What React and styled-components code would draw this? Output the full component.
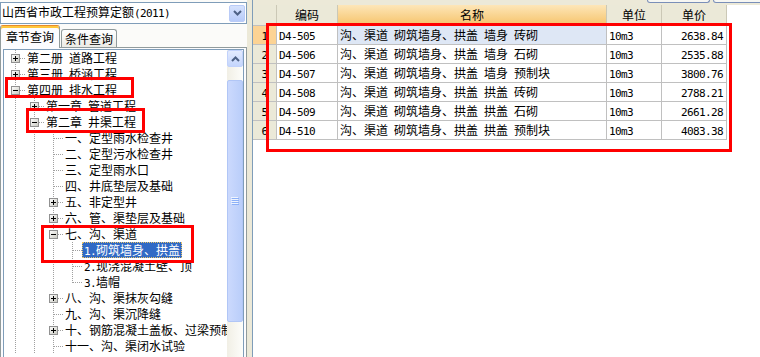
import React from "react";
import styled, { createGlobalStyle, css } from "styled-components";

const Global = createGlobalStyle`
  html, body { margin: 0; padding: 0; background: #fff; }
  body {
    font-family: "Noto Sans CJK SC", "Noto Sans", sans-serif;
    font-size: 12px;
    color: #000;
  }
  #root { width: 760px; height: 357px; }
`;

const Screen = styled.div`
  position: relative;
  width: 760px;
  height: 357px;
  overflow: hidden;
  display: flex;
  background: #ece9d8;
`;

/* ---------- text helper ---------- */
const Latin = styled.span`
  font-family: "DejaVu Sans Mono", "Liberation Mono", monospace;
  font-size: 11px;
  letter-spacing: -0.62px;
`;

function Mixed({ text }) {
  const parts = text.split(/([\x20-\x7e]+)/).filter(Boolean);
  return (
    <>
      {parts.map((p, i) =>
        /^[\x20-\x7e]+$/.test(p) ? (
          <Latin key={i}>{p}</Latin>
        ) : (
          <React.Fragment key={i}>{p}</React.Fragment>
        )
      )}
    </>
  );
}

/* ---------- left panel ---------- */
const LeftPanel = styled.div`
  width: 247px;
  flex: none;
  display: flex;
  flex-direction: column;
  background: #fbfbf9;
`;

const Combo = styled.div`
  margin-top: 2px;
  height: 22px;
  box-sizing: border-box;
  border: 1px solid #7f9db9;
  background: #fff;
  display: flex;
  align-items: center;
  padding: 0 1px;
`;

const ComboText = styled.div`
  flex: 1;
  line-height: 20px;
  white-space: pre;
  overflow: hidden;
`;

const DropButton = styled.div`
  width: 16px;
  height: 17px;
  box-sizing: border-box;
  border: 1px solid #b9cbf7;
  border-radius: 2px;
  background: linear-gradient(#d6e2fd, #b7cbf9);
  display: flex;
  align-items: center;
  justify-content: center;
`;

const TabRow = styled.div`
  margin-top: 1px;
  height: 22px;
  display: flex;
  align-items: flex-end;
`;

const Tab = styled.div`
  box-sizing: border-box;
  border: 1px solid #919b9c;
  border-bottom: none;
  border-radius: 3px 3px 0 0;
  white-space: nowrap;
  text-align: center;
  ${(p) =>
    p.$active
      ? css`
          width: 60px;
          height: 23px;
          margin-bottom: -1px;
          position: relative;
          z-index: 1;
          background: #fcfcfe;
          border-top: 1px solid #e68b2c;
          box-shadow: inset 0 2px 0 #ffc73c;
          line-height: 22px;
        `
      : css`
          width: 56px;
          height: 18px;
          margin-left: 1px;
          background: linear-gradient(#ffffff, #ecebe6);
          line-height: 17px;
        `}
`;

const TabPanel = styled.div`
  flex: 1;
  min-height: 0;
  box-sizing: border-box;
  border: 1px solid #919b9c;
  border-bottom: none;
  padding: 1px 2px 0 2px;
  display: flex;
  background: #fcfcfe;
`;

const TreeBox = styled.div`
  flex: 1;
  min-width: 0;
  border: 1px solid #7f9db9;
  border-bottom: none;
  background: #fff;
  display: flex;
`;

const TreeView = styled.div`
  flex: 1;
  min-width: 0;
  overflow: hidden;
  padding-left: 2px;
`;

const TreeRow = styled.div`
  display: flex;
  height: 16px;
  white-space: pre;
`;

const Label = styled.span`
  height: 16px;
  line-height: 16px;
  padding: 0 2px;
  box-sizing: border-box;
  ${(p) =>
    p.$selected &&
    css`
      background: #316ac5;
      color: #fff;
      outline: 1px dotted #e8c46a;
      outline-offset: -1px;
    `}
`;

const VScroll = styled.div`
  width: 16px;
  flex: none;
  display: flex;
  flex-direction: column;
  background: linear-gradient(to right, #f1efe5, #fdfdfa);
`;

const ScrollButton = styled.div`
  height: 17px;
  box-sizing: border-box;
  border: 1px solid #c2d2fb;
  border-radius: 2px;
  background: linear-gradient(#e3ebfe, #c4d5fc);
  display: flex;
  align-items: center;
  justify-content: center;
`;

const Thumb = styled.div`
  margin-top: 13px;
  height: 242px;
  box-sizing: border-box;
  border: 1px solid #b1c6f6;
  border-radius: 2px;
  background: linear-gradient(to right, #cbd9fd, #bacefa);
  display: flex;
  align-items: center;
  justify-content: center;
`;

/* ---------- splitter + right ---------- */
const Splitter = styled.div`
  width: 5px;
  flex: none;
  background: #ece9d8;
`;

const RightPanel = styled.div`
  flex: 1;
  min-width: 0;
  display: flex;
  flex-direction: column;
  background: #fff;
  border-left: 1px solid #7f9db9;
`;

const TopStrip = styled.div`
  height: 5px;
  flex: none;
  display: flex;
  justify-content: flex-end;
  align-items: flex-start;
  gap: 3px;
  padding-right: 0;
  margin-right: -5px;
  background: #ece9d8;
  overflow: hidden;
`;

const StubButton = styled.div`
  width: ${(p) => p.$w}px;
  height: 3px;
  box-sizing: border-box;
  border: 1px solid #7a8fb8;
  border-top: none;
  border-radius: 0 0 3px 3px;
  background: #f6f6f2;
`;

const Grid = styled.div`
  display: grid;
  grid-template-columns: 24px 61px 269px 55px 65px;
  width: 474px;
  white-space: pre;
`;

const HeadCell = styled.div`
  height: 21px;
  box-sizing: border-box;
  border-right: 1px solid #cbc8b6;
  border-bottom: 1px solid #c0c0c0;
  line-height: 20px;
  text-align: center;
  background: ${(p) =>
    p.$sorted ? "linear-gradient(#fde6b8, #f6c46c)" : "#ebe9d8"};
`;

const NumCell = styled.div`
  height: 19px;
  box-sizing: border-box;
  border-right: 1px solid #c0c0c0;
  border-bottom: 1px solid #c0c0c0;
  line-height: 18px;
  text-align: center;
  background: ${(p) => (p.$active ? "#fcd394" : "#ebe9d8")};
`;

const Cell = styled.div`
  height: 19px;
  box-sizing: border-box;
  border-right: 1px solid #c0c0c0;
  border-bottom: 1px solid #c0c0c0;
  line-height: 18px;
  padding: ${(p) => (p.$right ? "0 3px 0 0" : "0 0 0 2px")};
  text-align: ${(p) => (p.$right ? "right" : "left")};
  background: ${(p) => (p.$hl ? "#dee7f5" : "#fff")};
  overflow: hidden;
`;

const Mark = styled.div`
  position: absolute;
  left: ${(p) => p.$x}px;
  top: ${(p) => p.$y}px;
  width: ${(p) => p.$w}px;
  height: ${(p) => p.$h}px;
  box-sizing: border-box;
  border: 3px solid #ff0000;
  pointer-events: none;
  z-index: 5;
`;

/* ---------- drawings ---------- */
const LINE = "#a0a0a0";

function Guide({ on }) {
  return (
    <svg width="19" height="16" viewBox="0 0 19 16" shapeRendering="crispEdges" style={{ flex: "none" }}>
      {on && <line x1="9.5" y1="0" x2="9.5" y2="16" stroke={LINE} strokeDasharray="1 1" />}
    </svg>
  );
}

function Connector({ kind, last }) {
  return (
    <svg width="19" height="16" viewBox="0 0 19 16" shapeRendering="crispEdges" style={{ flex: "none" }}>
      <defs>
        <linearGradient id="exp" x1="0" y1="0" x2="1" y2="1">
          <stop offset="0" stopColor="#ffffff" />
          <stop offset="1" stopColor="#c8c8c0" />
        </linearGradient>
      </defs>
      <line x1="9.5" y1="0" x2="9.5" y2={last ? 9 : 16} stroke={LINE} strokeDasharray="1 1" />
      <line x1="10" y1="8.5" x2="19" y2="8.5" stroke={LINE} strokeDasharray="1 1" />
      {kind !== "leaf" && (
        <g>
          <rect x="5.5" y="4.5" width="8" height="8" fill="url(#exp)" stroke="#919191" />
          <line x1="7" y1="8.5" x2="12" y2="8.5" stroke="#000" />
          {kind === "plus" && <line x1="9.5" y1="6" x2="9.5" y2="11" stroke="#000" />}
        </g>
      )}
    </svg>
  );
}

const ChevronDown = () => (
  <svg width="9" height="6" viewBox="0 0 9 6">
    <polyline points="1,1 4.5,4.5 8,1" fill="none" stroke="#4d6185" strokeWidth="2" />
  </svg>
);

const ChevronUp = () => (
  <svg width="9" height="6" viewBox="0 0 9 6">
    <polyline points="1,5 4.5,1.5 8,5" fill="none" stroke="#4d6185" strokeWidth="2" />
  </svg>
);

const Grip = () => (
  <svg width="8" height="8" viewBox="0 0 8 8" shapeRendering="crispEdges">
    {[0, 2, 4, 6].map((y) => (
      <g key={y}>
        <line x1="0" y1={y + 0.5} x2="7" y2={y + 0.5} stroke="#eef4fe" />
        <line x1="1" y1={y + 1.5} x2="8" y2={y + 1.5} stroke="#8cb0f8" />
      </g>
    ))}
  </svg>
);

/* ---------- data ---------- */
const tree = [
  { t: "第二册 道路工程", lv: 0, kind: "plus" },
  { t: "第三册 桥涵工程", lv: 0, kind: "plus" },
  { t: "第四册 排水工程", lv: 0, kind: "minus" },
  { t: "第一章 管道工程", lv: 1, kind: "plus" },
  { t: "第二章 井渠工程", lv: 1, kind: "minus" },
  { t: "一、定型雨水检查井", lv: 2, kind: "leaf" },
  { t: "二、定型污水检查井", lv: 2, kind: "leaf" },
  { t: "三、定型雨水口", lv: 2, kind: "leaf" },
  { t: "四、井底垫层及基础", lv: 2, kind: "leaf" },
  { t: "五、非定型井", lv: 2, kind: "plus" },
  { t: "六、管、渠垫层及基础", lv: 2, kind: "plus" },
  { t: "七、沟、渠道", lv: 2, kind: "minus" },
  { t: "1.砌筑墙身、拱盖", lv: 3, kind: "leaf", selected: true },
  { t: "2.现浇混凝土壁、顶", lv: 3, kind: "leaf" },
  { t: "3.墙帽", lv: 3, kind: "leaf", last: true },
  { t: "八、沟、渠抹灰勾缝", lv: 2, kind: "plus" },
  { t: "九、沟、渠沉降缝", lv: 2, kind: "leaf" },
  { t: "十、钢筋混凝土盖板、过梁预制", lv: 2, kind: "plus" },
  { t: "十一、沟、渠闭水试验", lv: 2, kind: "leaf" },
];

const rows = [
  ["D4-505", "沟、渠道 砌筑墙身、拱盖 墙身 砖砌", "10m3", "2638.84"],
  ["D4-506", "沟、渠道 砌筑墙身、拱盖 墙身 石砌", "10m3", "2535.88"],
  ["D4-507", "沟、渠道 砌筑墙身、拱盖 墙身 预制块", "10m3", "3800.76"],
  ["D4-508", "沟、渠道 砌筑墙身、拱盖 拱盖 砖砌", "10m3", "2788.21"],
  ["D4-509", "沟、渠道 砌筑墙身、拱盖 拱盖 石砌", "10m3", "2661.28"],
  ["D4-510", "沟、渠道 砌筑墙身、拱盖 拱盖 预制块", "10m3", "4083.38"],
];

export default function App() {
  return (
    <>
      <Global />
      <Screen>
        <LeftPanel>
          <Combo>
            <ComboText>
              <Mixed text="山西省市政工程预算定额(2011)" />
            </ComboText>
            <DropButton>
              <ChevronDown />
            </DropButton>
          </Combo>
          <TabRow>
            <Tab $active>章节查询</Tab>
            <Tab>条件查询</Tab>
          </TabRow>
          <TabPanel>
            <TreeBox>
              <TreeView>
                {tree.map((n, i) => (
                  <TreeRow key={i}>
                    {Array.from({ length: n.lv }).map((_, g) => (
                      <Guide key={g} on />
                    ))}
                    <Connector kind={n.kind} last={n.last} />
                    <Label $selected={n.selected}>
                      <Mixed text={n.t} />
                    </Label>
                  </TreeRow>
                ))}
              </TreeView>
              <VScroll>
                <ScrollButton>
                  <ChevronUp />
                </ScrollButton>
                <Thumb>
                  <Grip />
                </Thumb>
              </VScroll>
            </TreeBox>
          </TabPanel>
        </LeftPanel>
        <Splitter />
        <RightPanel>
          <TopStrip>
            <StubButton $w={63} />
            <StubButton $w={52} />
          </TopStrip>
          <Grid>
            <HeadCell />
            <HeadCell>编码</HeadCell>
            <HeadCell $sorted>名称</HeadCell>
            <HeadCell>单位</HeadCell>
            <HeadCell>单价</HeadCell>
            {rows.map((r, i) => (
              <React.Fragment key={i}>
                <NumCell $active={i === 0}>
                  <Latin>{String(i + 1)}</Latin>
                </NumCell>
                <Cell>
                  <Mixed text={r[0]} />
                </Cell>
                <Cell $hl={i === 0}>
                  <Mixed text={r[1]} />
                </Cell>
                <Cell>
                  <Mixed text={r[2]} />
                </Cell>
                <Cell $right>
                  <Mixed text={r[3]} />
                </Cell>
              </React.Fragment>
            ))}
          </Grid>
        </RightPanel>
        <Mark $x={5} $y={77} $w={129} $h={21} />
        <Mark $x={26} $y={108} $w={119} $h={25} />
        <Mark $x={41} $y={225} $w={153} $h={38} />
        <Mark $x={266} $y={23} $w={466} $h={129} />
      </Screen>
    </>
  );
}
